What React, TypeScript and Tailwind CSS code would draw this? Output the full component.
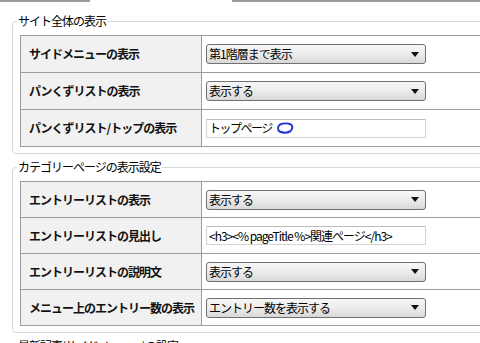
import React from "react";

const jp = "font-['MS_UI_Gothic','Noto_Sans_CJK_JP',sans-serif]";

type Field =
  | { label: string; kind: "select"; value: string }
  | { label: string; kind: "text"; value: string; mark?: boolean };

const Select = ({ value }: { value: string }) => (
  <div className="flex h-[20px] w-[220px] items-center justify-between rounded-[3px] border border-[#707070] bg-gradient-to-b from-[#f7f7f7] via-[#ececec] to-[#d8d8d8] pl-[2px] pr-[6px]">
    <span className="text-[12px] leading-none tracking-[-1px] text-black">{value}</span>
    <svg width="8" height="5" viewBox="0 0 8 5">
      <path d="M0 0h8L4 5z" fill="#111" />
    </svg>
  </div>
);

const TextBox = ({ value, mark }: { value: string; mark?: boolean }) => (
  <div className="flex h-[19px] w-[220px] items-center gap-[4px] border border-[#cfd3d1] border-t-[#b9bdbb] bg-white pl-[2px]">
    <span
      className={`whitespace-pre text-[12px] leading-none text-black ${
        mark ? "tracking-[-1.5px]" : "tracking-[-1px]"
      }`}
    >
      {value}
    </span>
    {mark && (
      <svg width="18" height="12" viewBox="0 0 18 12">
        <path
          d="M4 2.5C7 1 12 1 15 2.5c2 1.5 1.5 5-1 7-3 1.5-7 1.5-10.5 0C1.5 8 1.5 4 4 2.5z"
          fill="none"
          stroke="#1f33d6"
          strokeWidth="2"
        />
      </svg>
    )}
  </div>
);

const Section = ({ title, rows, tall }: { title: string; rows: Field[]; tall?: boolean }) => (
  <fieldset className="w-[520px] rounded-[4px] border border-[#d3dbd7] px-[7px] pb-[6px]">
    <legend className="ml-[-3px] px-[1px] text-[12px] leading-[16px] tracking-[-1px] text-black">
      {title}
    </legend>
    <div className="mt-[6px] border-l border-t border-[#9c9c9c]">
      {rows.map((r) => (
        <div
          key={r.label}
          className={`flex border-b border-[#9c9c9c] ${tall ? "h-[37px]" : "h-[36px]"}`}
        >
          <div className="flex w-[181px] items-center border-r border-[#9c9c9c] bg-[#f1f1f1] pl-[8px] text-[12px] font-bold tracking-[-1px] text-[#111]">
            {r.label}
          </div>
          <div className="flex flex-1 items-center pl-[4px]">
            {r.kind === "select" ? (
              <Select value={r.value} />
            ) : (
              <TextBox value={r.value} mark={r.mark} />
            )}
          </div>
        </div>
      ))}
    </div>
  </fieldset>
);

export default function App() {
  return (
    <div className={`h-[343px] w-[480px] overflow-hidden bg-white ${jp}`}>
      <div className="flex h-[2px]">
        <div className="w-[90px] bg-[#9a9a9a]" />
        <div className="w-[142px]" />
        <div className="flex-1 bg-[#9a9a9a]" />
      </div>
      <div className="mt-[11px] flex flex-col gap-[5px] pl-[12px]">
        <Section
          tall
          title="サイト全体の表示"
          rows={[
            { label: "サイドメニューの表示", kind: "select", value: "第1階層まで表示" },
            { label: "パンくずリストの表示", kind: "select", value: "表示する" },
            { label: "パンくずリスト/トップの表示", kind: "text", value: "トップページ", mark: true },
          ]}
        />
        <Section
          title="カテゴリーページの表示設定"
          rows={[
            { label: "エントリーリストの表示", kind: "select", value: "表示する" },
            { label: "エントリーリストの見出し", kind: "text", value: "<h3><% pageTitle %>関連ページ</h3>" },
            { label: "エントリーリストの説明文", kind: "select", value: "表示する" },
            { label: "メニュー上のエントリー数の表示", kind: "select", value: "エントリー数を表示する" },
          ]}
        />
        <Section title="最新記事(サイドメニュー)の設定" rows={[]} />
      </div>
    </div>
  );
}
